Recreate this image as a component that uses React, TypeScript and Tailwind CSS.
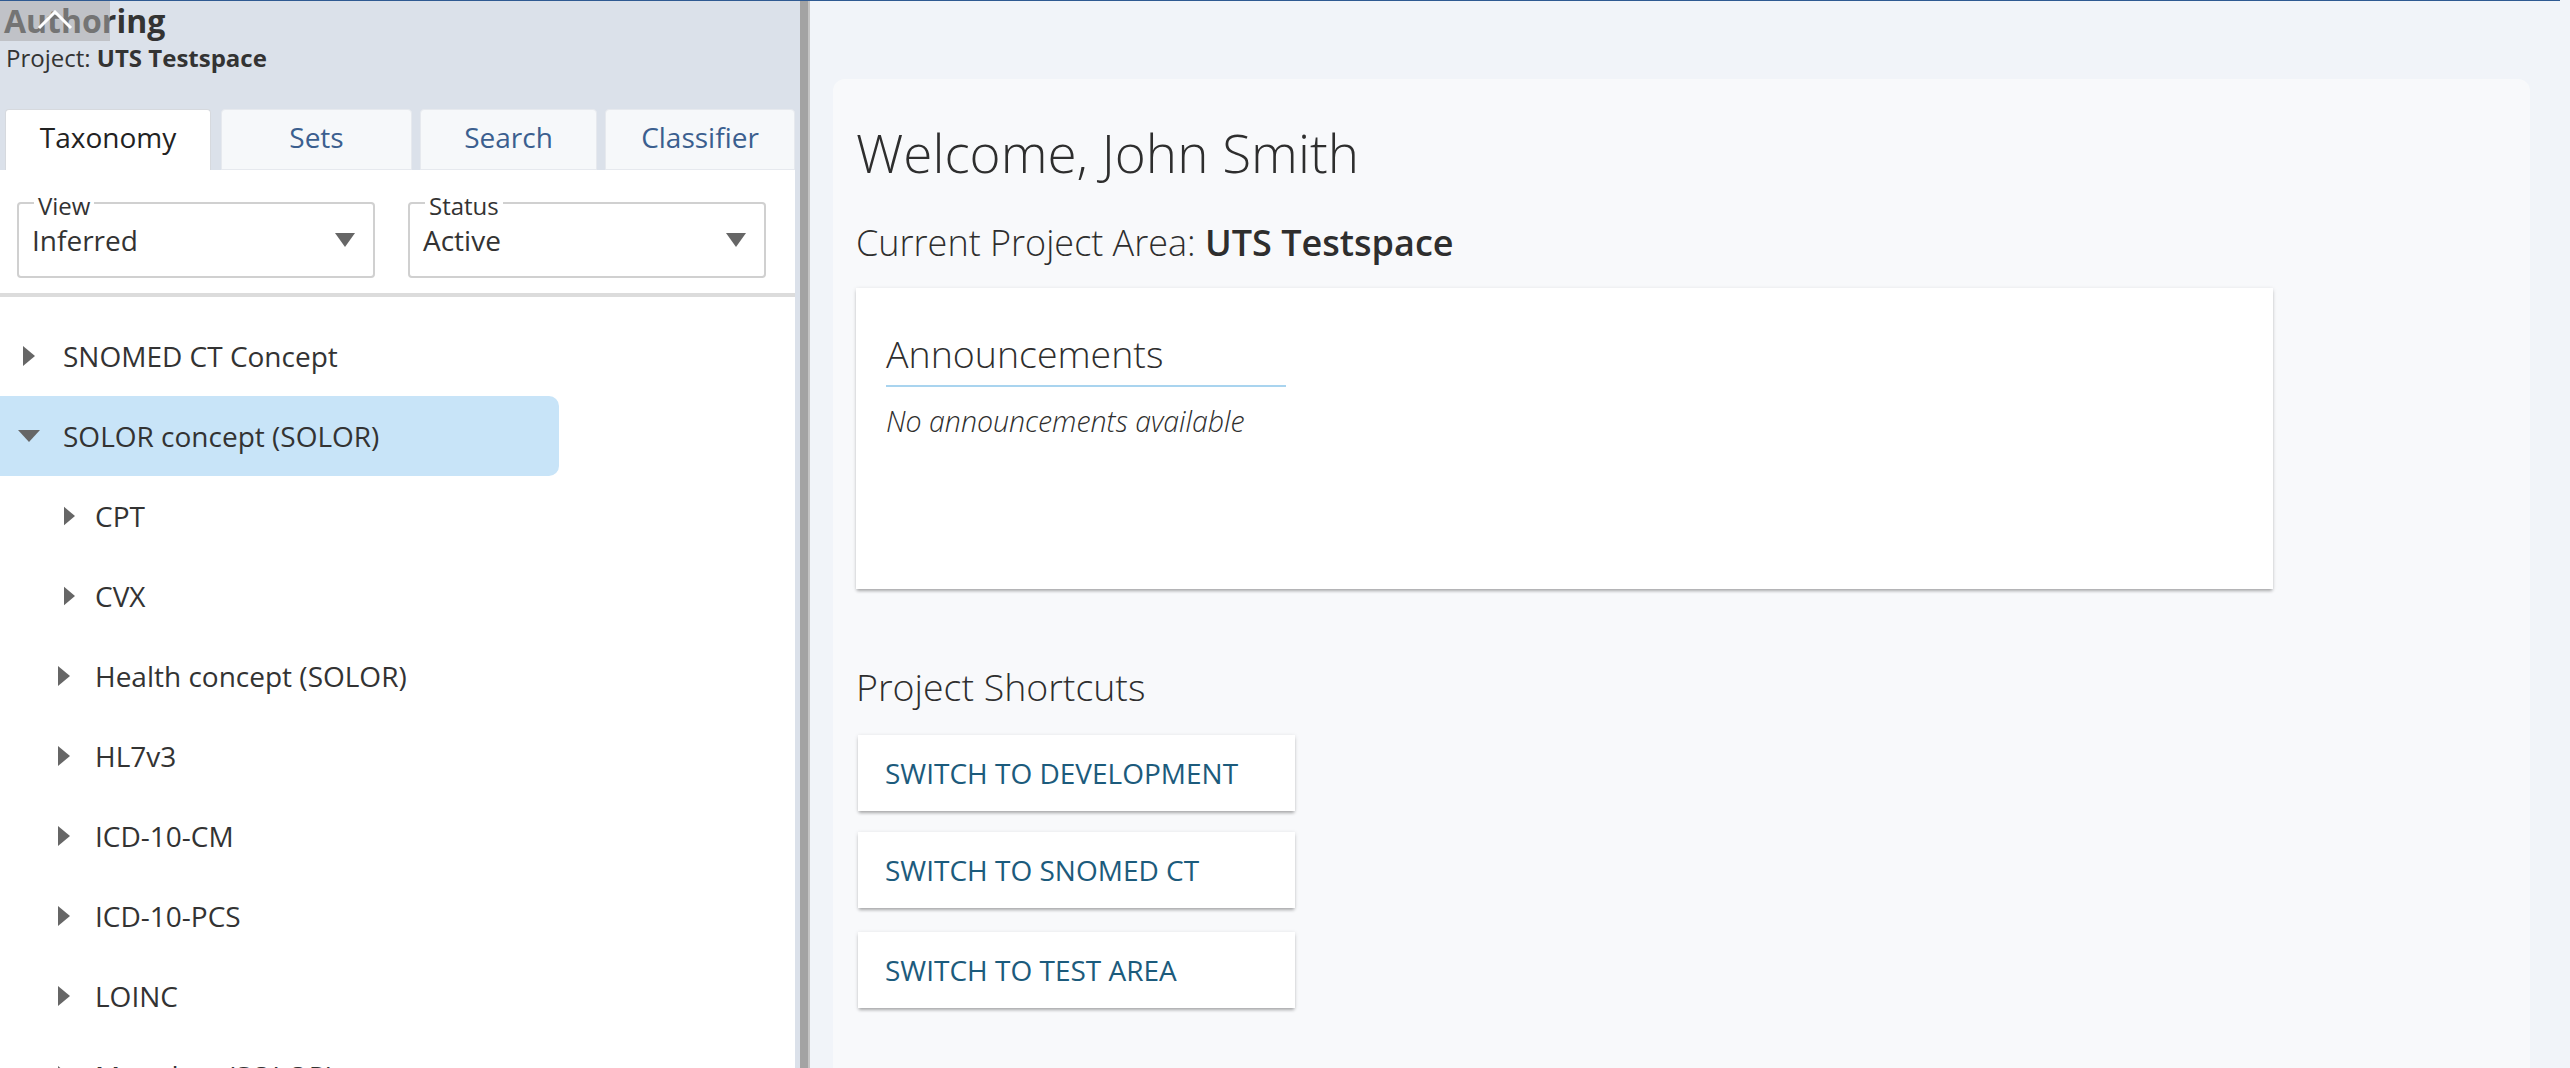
import React from "react"

type Node = { label: string; depth: 0 | 1; open?: boolean; selected?: boolean; nudge?: boolean }

const tree: Node[] = [
  { label: "SNOMED CT Concept", depth: 0 },
  { label: "SOLOR concept (SOLOR)", depth: 0, open: true, selected: true },
  { label: "CPT", depth: 1, nudge: true },
  { label: "CVX", depth: 1, nudge: true },
  { label: "Health concept (SOLOR)", depth: 1 },
  { label: "HL7v3", depth: 1 },
  { label: "ICD-10-CM", depth: 1 },
  { label: "ICD-10-PCS", depth: 1 },
  { label: "LOINC", depth: 1 },
  { label: "Metadata (SOLOR)", depth: 1 },
]

const tabs = [
  { label: "Taxonomy", cls: "w-[206px]", active: true },
  { label: "Sets", cls: "w-[191px] ml-[10px]" },
  { label: "Search", cls: "w-[177px] ml-[8px]" },
  { label: "Classifier", cls: "w-[190px] ml-[8px]" },
]

const shortcuts = [
  { label: "SWITCH TO DEVELOPMENT", cls: "mt-[26px]" },
  { label: "SWITCH TO SNOMED CT", cls: "mt-[21px]" },
  { label: "SWITCH TO TEST AREA", cls: "mt-[24px]" },
]

const cardShadow = "shadow-[0px_3px_3px_-1px_rgba(0,0,0,0.25),0px_1px_4px_0px_rgba(0,0,0,0.14)]"

function Caret({ open }: { open?: boolean }) {
  // tree expand/collapse arrow
  if (open) {
    return (
      <svg width="22" height="12" viewBox="0 0 22 12">
        <polygon points="0,0 22,0 11,12" fill="#666" />
      </svg>
    )
  }
  return (
    <svg width="12" height="20" viewBox="0 0 12 20">
      <polygon points="0,0 12,10 0,20" fill="#666" />
    </svg>
  )
}

function SelectBox({ label, value, cls }: { label: string; value: string; cls?: string }) {
  return (
    <div className={`relative w-[358px] h-[76px] border-2 border-[#d0d0d0] rounded-[4px] flex items-center justify-between pl-[13px] pr-[18px] ${cls || ""}`}>
      <span className="absolute -top-[10px] left-[15px] px-[4px] bg-white text-[24px] leading-[24px] text-[#333]">
        {label}
      </span>
      <span className="text-[28px] leading-[38px] text-[#333]">{value}</span>
      <svg width="20" height="14" viewBox="0 0 20 14">
        <polygon points="0,0 20,0 10,14" fill="#666" />
      </svg>
    </div>
  )
}

export default function App() {
  return (
    <div
      className="w-[2570px] h-[1068px] overflow-hidden flex flex-col bg-[#f1f4f9]"
      style={{ fontFamily: '"Open Sans", "Noto Sans", sans-serif' }}
    >
      <div className="w-[2560px] h-px bg-[#2f5a92] shrink-0" />
      <div className="flex flex-1 min-h-0">
        {/* Left: authoring panel */}
        <div className="relative w-[800px] shrink-0 bg-[#dbe1ea] flex flex-col overflow-hidden">
          <div className="shrink-0 pl-[4px] text-[32px] leading-[39px] font-bold text-[#333]">Authoring</div>
          <div className="shrink-0 pl-[6px] mt-[2px] text-[24px] leading-[32px] text-[#333]">
            Project: <span className="font-bold">UTS Testspace</span>
          </div>

          {/* scroll-to-top overlay */}
          <div className="absolute -top-px left-0 w-[110px] h-[41px] bg-[rgba(170,170,170,0.55)] flex justify-center pt-[10px]">
            <svg width="36" height="20" viewBox="0 0 36 20">
              <polyline points="2,18 18,2 34,18" fill="none" stroke="#fff" strokeWidth="3" />
            </svg>
          </div>

          <div className="shrink-0 flex mt-[35px] pl-[5px] h-[61px]">
            {tabs.map((t) =>
              t.active ? (
                <div
                  key={t.label}
                  className={`${t.cls} bg-white border border-b-0 border-[#d6d9de] rounded-t-[4px] flex justify-center pt-[8px] text-[28px] leading-[38px] text-[#222]`}
                >
                  {t.label}
                </div>
              ) : (
                <div
                  key={t.label}
                  className={`${t.cls} bg-[#f6f8fa] border border-[#e6e9ee] rounded-t-[4px] flex justify-center pt-[8px] text-[28px] leading-[38px] text-[#3b5f8f]`}
                >
                  {t.label}
                </div>
              )
            )}
          </div>

          <div className="w-[795px] flex-1 min-h-0 overflow-hidden bg-white flex flex-col">
            <div className="shrink-0 flex pt-[32px] pl-[17px]">
              <SelectBox label="View" value="Inferred" />
              <SelectBox label="Status" value="Active" cls="ml-[33px]" />
            </div>
            <div className="shrink-0 mt-[15px] h-[4px] bg-[#dcdcdc]" />

            <div className="shrink-0 pt-[19px] flex flex-col">
              {tree.map((n) => (
                <div
                  key={n.label}
                  className={`shrink-0 h-[80px] flex items-center ${n.depth === 0 ? "pl-[18px]" : "pl-[53px]"} ${
                    n.selected ? "w-[559px] bg-[#c8e4f8] rounded-r-[10px]" : ""
                  }`}
                >
                  <div className={`w-[22px] flex justify-center ${n.nudge ? "pl-[11px]" : ""}`}>
                    <Caret open={n.open} />
                  </div>
                  <span
                    className={`${n.depth === 0 ? "ml-[23px]" : "ml-[20px]"} text-[28px] leading-[38px] text-[#333] whitespace-nowrap`}
                  >
                    {n.label}
                  </span>
                </div>
              ))}
            </div>
          </div>
        </div>

        {/* splitter */}
        <div className="w-[10px] shrink-0 flex">
          <div className="w-[8px] bg-[#a3a3a3]" />
          <div className="w-[2px] bg-[#c4c4c4]" />
        </div>

        {/* Right: dashboard */}
        <div className="flex-1 pl-[23px] pr-[40px] pt-[78px]">
          <div className="h-[1100px] bg-[#f8f9fb] rounded-[12px] pl-[23px] pt-[44px] flex flex-col items-start">
            <h1 className="text-[53px] leading-[60px] font-light text-[#2e2e2e]">Welcome, John Smith</h1>
            <div className="mt-[38px] text-[36px] leading-[44px] font-light text-[#2e2e2e]">
              Current Project Area: <span className="font-semibold">UTS Testspace</span>
            </div>

            <div className={`mt-[23px] w-[1417px] h-[301px] bg-white ${cardShadow} pl-[30px] pt-[44px]`}>
              <h2 className="text-[37.5px] leading-[44px] font-light text-[#2e2e2e]">Announcements</h2>
              <div className="mt-[9px] w-[400px] h-[2px] bg-[#a9d4ef]" />
              <p className="mt-[16px] text-[28.5px] leading-[36px] font-light italic text-[#2e2e2e]">
                No announcements available
              </p>
            </div>

            <h2 className="mt-[76px] text-[37.5px] leading-[44px] font-light text-[#2e2e2e]">Project Shortcuts</h2>
            {shortcuts.map((s) => (
              <button
                key={s.label}
                className={`${s.cls} ml-[2px] w-[437px] h-[76px] bg-white flex items-center pl-[27px] text-[28px] leading-[36px] text-[#1c5b7c] ${cardShadow}`}
              >
                {s.label}
              </button>
            ))}
          </div>
        </div>
      </div>
    </div>
  )
}
